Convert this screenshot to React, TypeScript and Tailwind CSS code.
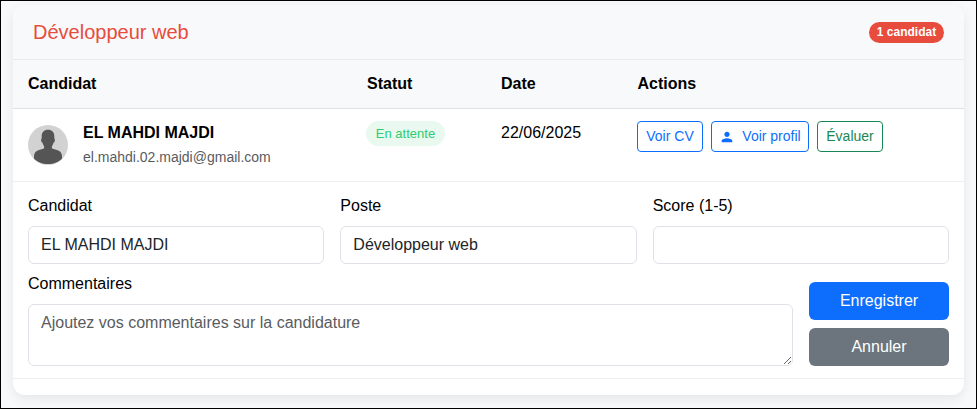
import React from 'react';

const FONT = "font-['Liberation_Sans',Arial,sans-serif]";
const FIELD =
  'block w-full rounded-[6px] border border-[#dee2e6] bg-white px-3 text-[16px] leading-6 text-[#212529] outline-none placeholder:text-[#595c5f]';
const SMALL_BUTTON = 'flex h-[31px] items-center justify-center rounded-[4px] border text-[14px] leading-[21px]';

function Avatar() {
  return (
    <svg className="size-10 shrink-0" viewBox="0 0 40 40">
      <circle cx="20" cy="20" r="20" fill="#d2d2d2" />
      <path
        fill="#555"
        d="M20 4.800C24 4.800 26.300 7.500 26.300 11.200V13.200C27 13.600 27 14.800 26.700 16C26.500 17 26.100 17.500 25.600 17.600C25.300 19.200 24.700 20.400 23.900 21.300V23C24.500 24 26.500 24.300 29 25.100C32.700 26.300 34 28.400 34 31.500V33.500C31 37 26 39 20 39S9 37 6 33.500V31.500C6 28.400 7.300 26.300 11 25.100C13.500 24.300 15.500 24 16.100 23V21.300C15.300 20.400 14.700 19.200 14.400 17.600C13.900 17.500 13.500 17 13.300 16C13 14.800 13 13.600 13.700 13.200V11.200C13.700 7.500 16 4.800 20 4.800Z"
      />
    </svg>
  );
}

function PersonIcon() {
  return (
    <svg className="mr-[7px] size-4" viewBox="0 0 24 24" fill="currentColor">
      <path d="M12 12c2.210 0 4-1.790 4-4s-1.790-4-4-4-4 1.790-4 4 1.790 4 4 4zm0 2c-2.670 0-8 1.340-8 4v2h16v-2c0-2.660-5.330-4-8-4z" />
    </svg>
  );
}

function Field({ label, value }: { label: string; value: string }) {
  return (
    <label className="block">
      <span className="mb-2 block">{label}</span>
      <input className={`${FIELD} h-[38px]`} defaultValue={value} />
    </label>
  );
}

const COLUMNS = 'grid grid-cols-[339px_134px_136.500px_1fr] px-[15px]';

export default function App() {
  return (
    <div
      className={`${FONT} h-[409px] w-[977px] overflow-hidden border border-black bg-[#f8f9fb] pt-1 pr-3 pl-3 text-[16px] leading-6 text-black`}
    >
      <div className="h-[390px] w-[951px] overflow-hidden rounded-[12px] bg-white shadow-[0_4px_12px_rgba(0,0,0,0.08)]">
        <div className="flex h-[55px] items-center justify-between border-b border-[#e9ebed] bg-[#f8f9fb] pr-5 pl-5">
          <h2 className="text-[20px] leading-6 text-[#e74c3c]">Développeur web</h2>
          <span className="flex h-[21px] w-[75px] items-center justify-center rounded-full bg-[#e74c3c] text-[12px] leading-3 font-bold text-white">
            1 candidat
          </span>
        </div>
        <div className={`${COLUMNS} h-[49px] border-b border-[#dee2e6] bg-[#f8f9fb] pt-3 font-bold`}>
          <span>Candidat</span>
          <span>Statut</span>
          <span>Date</span>
          <span>Actions</span>
        </div>
        <div className={`${COLUMNS} h-[73px] border-b border-[#eee] pt-3`}>
          <div className="flex">
            <div className="mr-[15px] pt-1">
              <Avatar />
            </div>
            <div>
              <div className="font-bold">EL MAHDI MAJDI</div>
              <div className="mt-[2px] text-[14px] leading-[21px] text-[#595c5f]">el.mahdi.02.majdi@gmail.com</div>
            </div>
          </div>
          <div>
            <span className="-ml-px flex h-[25px] w-[79px] items-center justify-center rounded-full bg-[#e9f9f0] text-[13px] leading-5 text-[#2ecc71]">
              En attente
            </span>
          </div>
          <div>22/06/2025</div>
          <div className="-ml-[0.5px] flex gap-2">
            <button className={`${SMALL_BUTTON} w-[66px] border-[#0d6efd] text-[#0d6efd]`}>Voir CV</button>
            <button className={`${SMALL_BUTTON} w-[98px] border-[#0d6efd] text-[#0d6efd]`}>
              <PersonIcon />
              Voir profil
            </button>
            <button className={`${SMALL_BUTTON} w-[66px] border-[#198754] text-[#198754]`}>Évaluer</button>
          </div>
        </div>
        <div className="h-[197px] border-b border-[#eee] px-[15px] pt-3">
          <div className="grid grid-cols-3 gap-4">
            <Field label="Candidat" value="EL MAHDI MAJDI" />
            <Field label="Poste" value="Développeur web" />
            <Field label="Score (1-5)" value="" />
          </div>
          <div className="mt-2 flex items-end gap-4">
            <label className="block w-[765px]">
              <span className="mb-2 block">Commentaires</span>
              <textarea
                className={`${FIELD} h-[62px] py-1.5`}
                placeholder="Ajoutez vos commentaires sur la candidature"
              />
            </label>
            <div className="flex w-[140px] flex-col gap-2 text-white">
              <button className="h-[38px] rounded-[6px] bg-[#0d6efd]">Enregistrer</button>
              <button className="h-[38px] rounded-[6px] bg-[#6c757d]">Annuler</button>
            </div>
          </div>
        </div>
      </div>
    </div>
  );
}
